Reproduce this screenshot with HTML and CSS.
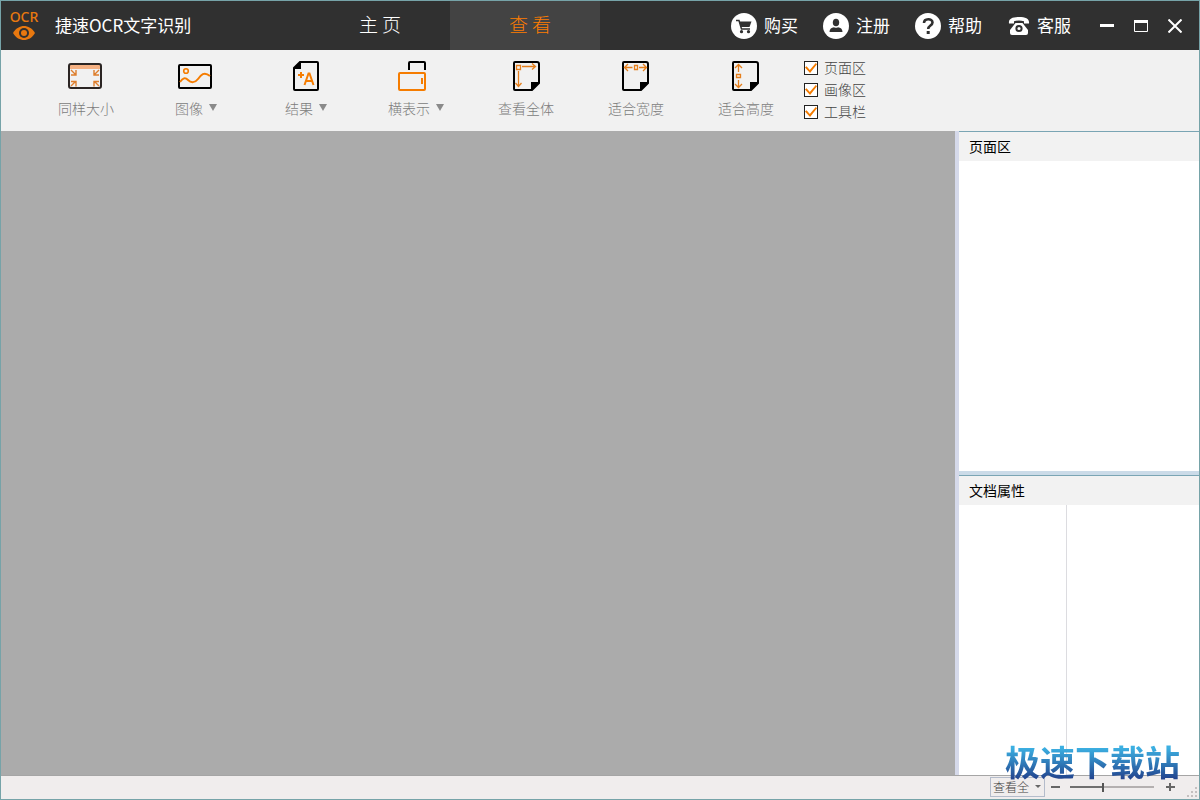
FILE: index.html
```html
<!DOCTYPE html>
<html lang="zh-CN">
<head>
    <meta charset="UTF-8">
    <meta name="viewport" content="width=device-width, initial-scale=1.0">
    <title>捷速OCR文字识别</title>
    <link rel="stylesheet" href="styles.css">
</head>
<body>

<div class="window">
    <header class="titlebar">
        <div class="brand">
            <div class="logo">
                <span class="logo-text">OCR</span>
                <svg width="24" height="16" viewBox="0 0 24 16">
                    <path d="M1 8C4 3 8 1 12 1s8 2 11 7c-3 5-7 7-11 7S4 13 1 8z" fill="#e8780f"/>
                    <circle cx="12" cy="8" r="5" fill="#303030"/>
                    <circle cx="12" cy="8" r="3" fill="#e8780f"/>
                </svg>
            </div>
            <h1>捷速OCR文字识别</h1>
        </div>
        <nav class="tabs">
            <button type="button" class="tab">主 页</button>
            <button type="button" class="tab active">查 看</button>
        </nav>
        <div class="links">
            <a href="#">
                <svg width="26" height="26" viewBox="0 0 26 26">
                    <circle cx="13" cy="13" r="13" fill="#fff"/>
                    <path d="M5 7.500h3l2.500 8.500h8.500" fill="none" stroke="#303030" stroke-width="1.500"/>
                    <path d="M8 8.500H20.500L18.500 14H10z" fill="#303030"/>
                    <circle cx="10.500" cy="18.700" r="1.600" fill="#303030"/>
                    <circle cx="17.500" cy="18.700" r="1.600" fill="#303030"/>
                </svg>
                <span>购买</span>
            </a>
            <a href="#">
                <svg width="26" height="26" viewBox="0 0 26 26">
                    <circle cx="13" cy="13" r="13" fill="#fff"/>
                    <ellipse cx="13" cy="9.500" rx="3.200" ry="3.800" fill="#303030"/>
                    <path d="M6.500 19c0-3 2-4.500 4.500-4.700q2 1 4 0c2.500.2 4.500 1.700 4.500 4.700z" fill="#303030"/>
                </svg>
                <span>注册</span>
            </a>
            <a href="#">
                <svg width="26" height="26" viewBox="0 0 26 26">
                    <circle cx="13" cy="13" r="13" fill="#fff"/>
                    <path d="M9 10c0-5 8.500-5 8.500-.5 0 3-4.300 3-4.300 6.500" fill="none" stroke="#303030" stroke-width="2.600"/>
                    <rect x="11.700" y="18" width="3" height="3" fill="#303030"/>
                </svg>
                <span>帮助</span>
            </a>
            <a href="#">
                <svg width="23" height="26" viewBox="0 0 23 26">
                    <path d="M2 10.500C1.300 6 5 4 12 4s10.700 2 10 6.500h-5V8.200Q12 7 7 8.200v2.300z" fill="#fff"/>
                    <path d="M8.500 10h7l5.500 7v3q0 2-2 2H5q-2 0-2-2v-3z" fill="#fff"/>
                    <circle cx="12" cy="15.500" r="2.600" fill="#fff" stroke="#303030" stroke-width="2"/>
                </svg>
                <span>客服</span>
            </a>
        </div>
        <div class="controls">
            <button type="button" aria-label="最小化">
                <svg width="14" height="14" viewBox="0 0 14 14"><path d="M0 6.500h14" stroke="#fff" stroke-width="3"/></svg>
            </button>
            <button type="button" aria-label="最大化">
                <svg width="14" height="14" viewBox="0 0 14 14"><path d="M.5 2v10.500h13V2" fill="none" stroke="#fff"/><path d="M0 2.500h14" stroke="#fff" stroke-width="3"/></svg>
            </button>
            <button type="button" aria-label="关闭">
                <svg width="14" height="14" viewBox="0 0 14 14"><path d="M.5.5l13 13M13.500.5l-13 13" stroke="#fff" stroke-width="2"/></svg>
            </button>
        </div>
    </header>

    <div class="toolbar">
        <button type="button" class="tool">
            <svg width="36" height="32" viewBox="0 0 36 32">
                <rect x="1" y="4" width="32" height="5" fill="#f5b183"/>
                <rect x="1" y="4" width="32" height="24" rx="2" fill="none" stroke="#2b2523" stroke-width="2"/>
                <path d="M3 10l4.500 4.500M8 10v5H3M31 10l-4.500 4.500M26 10v5h5M3 26l4.500-4.500M3 21.500h5v5M31 26l-4.500-4.500M26 26.500v-5h5" fill="none" stroke="#dd7e2d" stroke-width="1.400"/>
            </svg>
            <span class="tool-label">同样大小</span>
        </button>
        <button type="button" class="tool">
            <svg width="36" height="32" viewBox="0 0 36 32">
                <rect x="1" y="5" width="32" height="23" rx="1" fill="none" stroke="#000" stroke-width="2"/>
                <circle cx="8" cy="11" r="2.300" fill="none" stroke="#f57c00" stroke-width="1.600"/>
                <path d="M2 22c3-4 5-5 8-2s7 3 10-1 6-8 12-3" fill="none" stroke="#f57c00" stroke-width="2"/>
            </svg>
            <span class="tool-label">图像<i class="caret"></i></span>
        </button>
        <button type="button" class="tool">
            <svg width="36" height="32" viewBox="0 0 36 32">
                <path d="M12 2h17q1 0 1 1v26q0 1-1 1H7q-1 0-1-1V8z" fill="none" stroke="#000" stroke-width="2"/>
                <path d="M13 1v8H5z" fill="#000"/>
                <path d="M10 15h6M13 12v6" stroke="#f57c00" stroke-width="2"/>
                <path d="M16.500 25l4-11.500h1l4 11.500M18 21h6" fill="none" stroke="#f57c00" stroke-width="2"/>
            </svg>
            <span class="tool-label">结果<i class="caret"></i></span>
        </button>
        <button type="button" class="tool">
            <svg width="36" height="32" viewBox="0 0 36 32">
                <path d="M11 10V3q0-1 1-1h14q1 0 1 1v7" fill="none" stroke="#000" stroke-width="2"/>
                <rect x="1" y="13" width="26" height="17" rx="1" fill="none" stroke="#f57c00" stroke-width="2"/>
                <path d="M24 18v6" stroke="#f57c00" stroke-width="2"/>
            </svg>
            <span class="tool-label">横表示<i class="caret"></i></span>
        </button>
        <button type="button" class="tool">
            <svg width="36" height="32" viewBox="0 0 36 32">
                <path d="M7 2h22q2 0 2 2v19l-7 7H7q-1 0-1-1V3q0-1 1-1z" fill="none" stroke="#000" stroke-width="2"/>
                <path d="M23 31v-9h9z" fill="#000"/>
                <path d="M8.500 5.500h4v4h-4zM14 6.500h13M24 3.500l3.500 3-3.500 3M10.500 11v15M7.500 23l3 3.500 3-3.500" fill="none" stroke="#e57f1c" stroke-width="1.300"/>
            </svg>
            <span class="tool-label">查看全体</span>
        </button>
        <button type="button" class="tool">
            <svg width="36" height="32" viewBox="0 0 36 32">
                <path d="M6 2h22q2 0 2 2v19l-7 7H6q-1 0-1-1V3q0-1 1-1z" fill="none" stroke="#000" stroke-width="2"/>
                <path d="M22 31v-9h9z" fill="#000"/>
                <path d="M16.500 5.500h3v4h-3zM7 7.500h7.500M10 4L6.500 7.500 10 11M21 7.500h7.500M25 4l3.500 3.500L25 11" fill="none" stroke="#e57f1c" stroke-width="1.300"/>
            </svg>
            <span class="tool-label">适合宽度</span>
        </button>
        <button type="button" class="tool">
            <svg width="36" height="32" viewBox="0 0 36 32">
                <path d="M6 2h22q2 0 2 2v19l-7 7H6q-1 0-1-1V3q0-1 1-1z" fill="none" stroke="#000" stroke-width="2"/>
                <path d="M22 31v-9h9z" fill="#000"/>
                <path d="M8.500 14.500h4v3h-4zM10.500 12V5M7 8l3.500-3.500L14 8M10.500 20v7M7 24l3.500 3.500L14 24" fill="none" stroke="#e57f1c" stroke-width="1.300"/>
            </svg>
            <span class="tool-label">适合高度</span>
        </button>
        <div class="toggles">
            <label><input type="checkbox" checked><span>页面区</span></label>
            <label><input type="checkbox" checked><span>画像区</span></label>
            <label><input type="checkbox" checked><span>工具栏</span></label>
        </div>
    </div>

    <div class="main">
        <main class="canvas"></main>
        <aside class="side">
            <section class="panel pages">
                <h2>页面区</h2>
                <div class="panel-body"></div>
            </section>
            <div class="splitter"></div>
            <section class="panel props">
                <h2>文档属性</h2>
                <div class="panel-body columns">
                    <div class="prop-names"></div>
                    <div class="prop-values"></div>
                </div>
            </section>
        </aside>
    </div>

    <footer class="statusbar">
        <div class="zoom-select">
            <select aria-label="缩放">
                <option>查看全</option>
            </select>
        </div>
        <button type="button" class="zoom-btn" aria-label="缩小">
            <svg width="9" height="9" viewBox="0 0 9 9"><path d="M0 4h9" stroke="#666" stroke-width="2"/></svg>
        </button>
        <input type="range" class="zoom-range" min="0" max="100" value="39" aria-label="缩放比例">
        <button type="button" class="zoom-btn" aria-label="放大">
            <svg width="9" height="9" viewBox="0 0 9 9"><path d="M0 4h9M4 0v8" stroke="#666" stroke-width="2"/></svg>
        </button>
        <svg class="grip" width="10" height="10" viewBox="0 0 10 10">
            <path d="M8 0h2v2H8zM4 4h2v2H4zM8 4h2v2H8zM0 8h2v2H0zM4 8h2v2H4zM8 8h2v2H8z" fill="#c4c0c0"/>
        </svg>
    </footer>

    <div class="watermark">极速下载站</div>
</div>

</body>
</html>
```
FILE: styles.css
```css
* {
    box-sizing: border-box;
}
body {
    margin: 0;
    font-family: "Noto Sans CJK SC", sans-serif;
    font-size: 14px;
}
button, select, input {
    font-family: inherit;
    margin: 0;
}
button {
    background: none;
    border: 0;
    padding: 0;
    cursor: pointer;
}
h1, h2 {
    margin: 0;
    font-weight: normal;
}
svg {
    display: block;
    flex: none;
}

.window {
    position: relative;
    display: flex;
    flex-direction: column;
    height: 100vh;
    border: 1px solid #76a3a8;
}

/* title bar */
.titlebar {
    display: flex;
    height: 49px;
    background: #303030;
    color: #fff;
}
.brand {
    display: flex;
    align-items: center;
    gap: 16px;
    width: 299px;
    padding: 0 0 2px 8px;
}
.logo {
    display: flex;
    flex-direction: column;
    align-items: center;
    width: 30px;
}
.logo-text {
    font-family: "Noto Sans", sans-serif;
    font-size: 14px;
    font-weight: 500;
    line-height: 16px;
    color: #e8780f;
}
.brand h1 {
    font-size: 17px;
    line-height: 24px;
}
.tabs {
    display: flex;
}
.tab {
    width: 150px;
    padding: 0 0 4px 10px;
    color: #fff;
    font-size: 19px;
    font-weight: 300;
}
.tab.active {
    background: #434343;
    color: #ff7e00;
}
.links {
    display: flex;
    align-items: center;
    gap: 25px;
    margin-left: auto;
}
.links a {
    display: flex;
    align-items: center;
    gap: 7px;
    color: #fff;
    font-size: 17px;
    line-height: 24px;
    text-decoration: none;
}
.links span {
    padding-bottom: 2px;
}
.controls {
    display: flex;
    padding: 0 7px 0 19px;
}
.controls button {
    display: flex;
    align-items: center;
    justify-content: center;
    width: 34px;
}

/* tool bar */
.toolbar {
    display: flex;
    height: 81px;
    padding-left: 30px;
    background: #f1f1f1;
}
.tool {
    display: flex;
    flex-direction: column;
    align-items: center;
    gap: 6px;
    width: 110px;
    padding-top: 10px;
}
.tool-label {
    display: flex;
    align-items: center;
    gap: 6px;
    color: #7c7c7c;
    font-size: 14px;
    font-weight: 300;
    line-height: 20px;
}
.caret {
    border: 4px solid transparent;
    border-top: 7px solid #8a8a8a;
    border-bottom: 0;
    margin-bottom: 2px;
}
.toggles {
    padding: 7px 0 0 3px;
}
.toggles label {
    display: flex;
    align-items: center;
    gap: 6px;
    height: 22px;
    color: #444;
    font-weight: 300;
    line-height: 20px;
}
.toggles span {
    padding-bottom: 2px;
}
.toggles input {
    appearance: none;
    display: grid;
    place-items: center;
    width: 14px;
    height: 14px;
    border: 1px solid #222;
    background: #fff;
}
.toggles input:checked::before {
    content: "";
    width: 12px;
    height: 10px;
    background: #f57c00;
    clip-path: polygon(0 45%, 13% 33%, 40% 70%, 90% 0, 100% 12%, 42% 100%);
}

/* work area */
.main {
    display: flex;
    flex: 1;
    min-height: 0;
}
.canvas {
    flex: 1;
    background: #ababab;
}
.side {
    display: flex;
    flex-direction: column;
    width: 244px;
    border-left: 4px solid #d5d9ea;
    background: #fff;
}
.panel {
    display: flex;
    flex-direction: column;
}
.pages {
    flex: 34;
}
.props {
    flex: 30;
}
.panel h2 {
    padding-left: 10px;
    border-top: 1px solid #7aa5b4;
    background: #f2f2f2;
    color: #000;
    font-size: 14px;
    line-height: 29px;
}
.panel-body {
    flex: 1;
}
.splitter {
    height: 4px;
    background: #cbdbe8;
}
.columns {
    display: flex;
}
.prop-names {
    width: 108px;
    border-right: 1px solid #dcdce0;
}

/* status bar */
.statusbar {
    display: flex;
    align-items: center;
    justify-content: flex-end;
    height: 24px;
    padding: 0 2px 1px 0;
    border-top: 1px solid #a5a5a5;
    background: #f0eded;
}
.zoom-select {
    position: relative;
}
.zoom-select select {
    appearance: none;
    display: block;
    width: 55px;
    height: 20px;
    padding: 0 0 2px 2px;
    border: 1px solid #b4bccb;
    border-radius: 0;
    background: #f0eded;
    color: #444;
    font-size: 12px;
    font-weight: 300;
}
.zoom-select::after {
    content: "";
    position: absolute;
    top: 8px;
    right: 4px;
    border: 3px solid transparent;
    border-top-color: #666;
    border-bottom: 0;
    pointer-events: none;
}
.zoom-btn {
    margin: 0 6px;
}
.zoom-range {
    appearance: none;
    width: 84px;
    height: 10px;
    margin: 0 6px 0 4px;
    background: linear-gradient(to right, #707070 40%, #b4b0b0 40%) center / 100% 2px no-repeat;
}
.zoom-range::-webkit-slider-thumb {
    appearance: none;
    width: 2px;
    height: 9px;
    background: #555;
}
.grip {
    align-self: flex-end;
    margin: 0 0 1px 6px;
}

.watermark {
    position: absolute;
    right: 19px;
    bottom: 16px;
    font-size: 35px;
    font-weight: bold;
    line-height: 44px;
    color: transparent;
    background: linear-gradient(#3cb0e2 20%, #22458f 90%);
    background-clip: text;
    -webkit-background-clip: text;
    pointer-events: none;
}
```
